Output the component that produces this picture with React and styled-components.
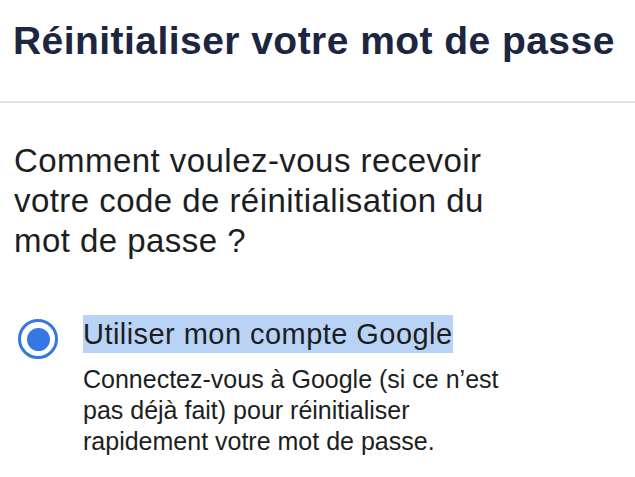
import React from "react";
import styled, { createGlobalStyle } from "styled-components";

const GlobalStyle = createGlobalStyle`
  html, body {
    margin: 0;
    padding: 0;
    background: #ffffff;
  }
  body {
    font-family: "Liberation Sans", Arial, Helvetica, sans-serif;
  }
`;

const Page = styled.div`
  width: 635px;
  height: 477px;
  overflow: hidden;
  background: #fff;
`;

const Header = styled.header`
  box-sizing: border-box;
  height: 103px;
  padding: 17px 13px 0;
  border-bottom: 2px solid #e4e4e4;
`;

const Title = styled.h1`
  margin: 0;
  font-size: 39px;
  line-height: 48px;
  letter-spacing: 0.45px;
  font-weight: 700;
  color: #1c2641;
  white-space: nowrap;
`;

const Body = styled.div`
  padding: 38px 14px 0;
`;

const Question = styled.p`
  margin: 0;
  font-size: 33px;
  line-height: 40px;
  letter-spacing: 0.45px;
  color: #1c1e21;
  width: 500px;
`;

const Option = styled.label`
  display: flex;
  align-items: flex-start;
  gap: 25px;
  margin-top: 54px;
  padding-left: 4px;
`;

const Radio = styled.span`
  flex: none;
  width: 40px;
  height: 40px;
  box-sizing: border-box;
  border-radius: 50%;
  border: 3px solid #3578e5;
  display: flex;
  align-items: center;
  justify-content: center;
  margin-top: 4px;
  &:after {
    content: "";
    width: 23px;
    height: 23px;
    border-radius: 50%;
    background: ${(p) => (p.checked ? "#3578e5" : "transparent")};
  }
`;

const OptionText = styled.div`
  display: flex;
  flex-direction: column;
`;

const OptionLabel = styled.span`
  align-self: flex-start;
  font-size: 29px;
  line-height: 38px;
  letter-spacing: 0.45px;
  color: #1c1e21;
  background: #b9d3f6;
`;

const OptionDesc = styled.p`
  margin: 11px 0 0;
  font-size: 25px;
  line-height: 31px;
  color: #1c1e21;
  width: 440px;
`;

export default function App() {
  return (
    <>
      <GlobalStyle />
      <Page>
        <Header>
          <Title>Réinitialiser votre mot de passe</Title>
        </Header>
        <Body>
          <Question>
            Comment voulez-vous recevoir votre code de réinitialisation du mot de passe ?
          </Question>
          <Option>
            <Radio checked />
            <OptionText>
              <OptionLabel>Utiliser mon compte Google</OptionLabel>
              <OptionDesc>
                Connectez-vous à Google (si ce n’est pas déjà fait) pour réinitialiser
                rapidement votre mot de passe.
              </OptionDesc>
            </OptionText>
          </Option>
        </Body>
      </Page>
    </>
  );
}
